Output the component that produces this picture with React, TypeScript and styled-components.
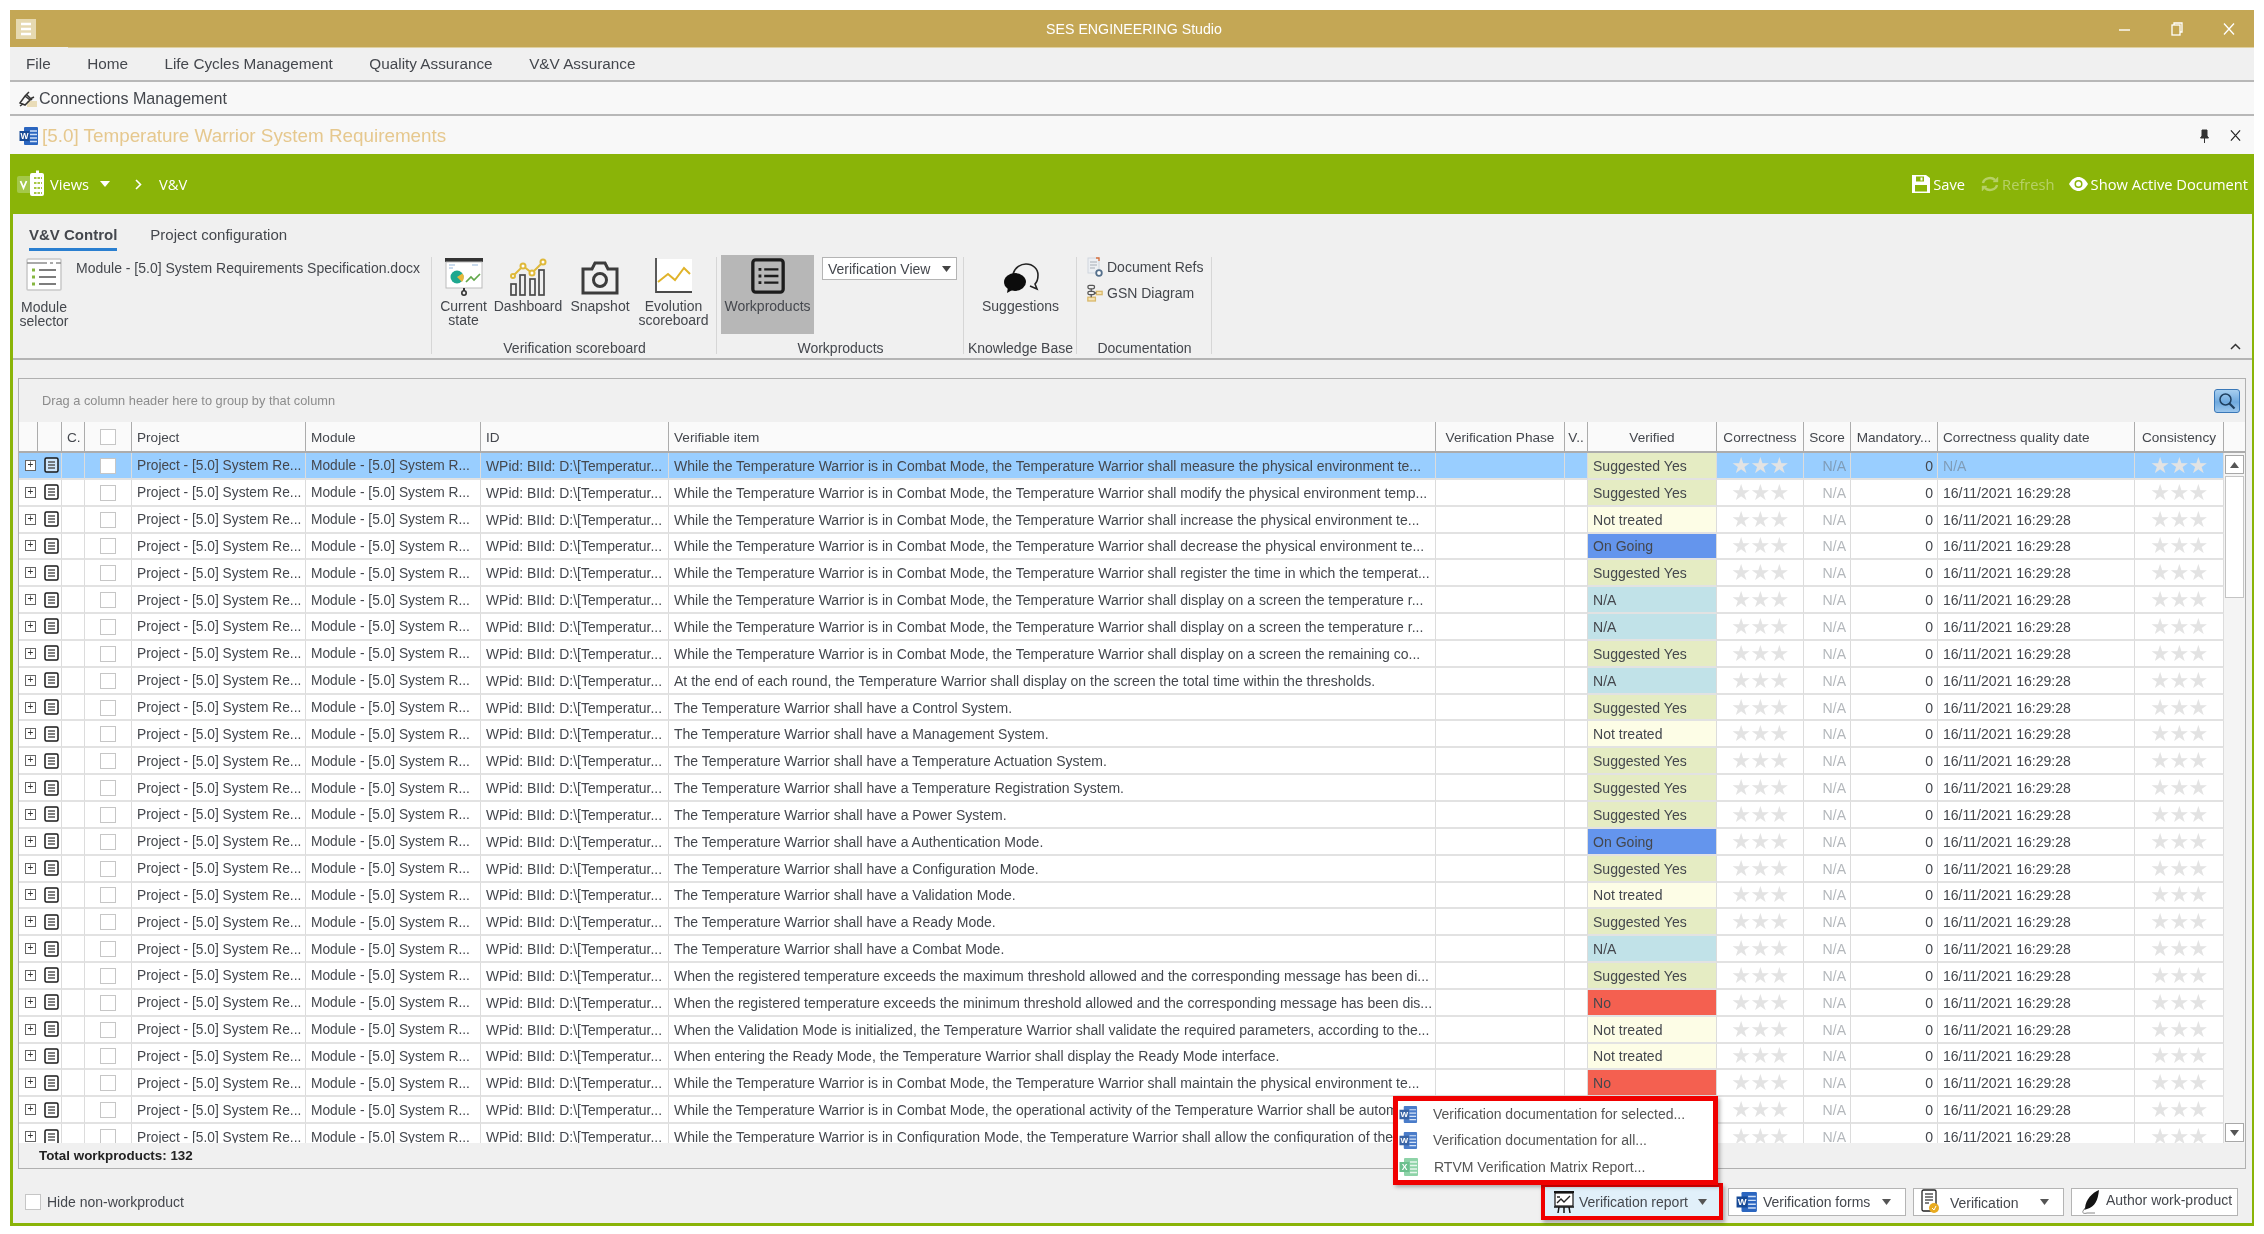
import React from 'react';
import styled, { createGlobalStyle } from 'styled-components';

const Global = createGlobalStyle`
  html, body { margin: 0; padding: 0; background: #fff; }
  body { font-family: "Liberation Sans", Arial, sans-serif; color: #44474d; }
  * { box-sizing: border-box; }
`;

const Shell = styled.div`
  width: 2264px;
  height: 1234px;
  padding: 10px 10px 8px 10px;
  overflow: hidden;
  background: #fff;
  filter: blur(0.35px);
`;
const TitleBar = styled.header`
  height: 38px;
  background: #c4a755;
  box-shadow: inset 0 -1px #dfd0a0;
  display: grid;
  grid-template-columns: 1fr auto 1fr;
  align-items: center;
  padding-left: 6px;
  color: #fff;
`;
const TitleText = styled.div`
  font-size: 14.2px;
  margin-left: -2px;
`;
const WinControls = styled.div`
  display: flex;
  gap: 40px;
  padding-right: 19px;
  align-items: center;
  justify-content: flex-end;
`;
const MenuBar = styled.nav`
  height: 34px;
  background: #f0f0f0;
  border-bottom: 2px solid #b8b8b8;
  display: flex;
  align-items: center;
  gap: 36.5px;
  padding-left: 16px;
  font-size: 15.3px;
  position: relative;
  &::before {
    content: '';
    position: absolute;
    left: 0;
    top: -1px;
    width: 58px;
    height: 1px;
    background: #f0f0f0;
  }
`;
const ConnBar = styled.div`
  height: 34px;
  background: #f8f8f8;
  border-bottom: 2px solid #b8b8b8;
  display: flex;
  align-items: center;
  gap: 1px;
  padding: 1px 0 0 8px;
  font-size: 16.1px;
`;
const DocBar = styled.div`
  height: 38px;
  background: #f8f8f8;
  display: flex;
  align-items: center;
  padding: 1px 0 0 9px;
  gap: 3px;
`;
const DocTitle = styled.div`
  flex: 1;
  font-size: 18.85px;
  color: #e6c88e;
`;
const DocActions = styled.div`
  display: flex;
  align-items: center;
  gap: 21px;
  padding-right: 13px;
`;
const GreenBar = styled.div`
  height: 60px;
  background: #8ab408;
  color: #fff;
  display: flex;
  align-items: center;
  padding-left: 7px;
  font-family: "Open Sans", sans-serif;
  font-size: 14.7px;
`;
const GreenLeft = styled.div`
  flex: 1;
  display: flex;
  align-items: center;
`;
const ViewsLabel = styled.span`
  margin-left: 3px;
`;
const ViewsCaret = styled.span`
  margin: 0 25px 0 11px;
  display: inline-flex;
`;
const Crumb = styled.span`
  margin-left: 17px;
`;
const GreenAction = styled.div<{ $off?: boolean; $mr?: number }>`
  display: flex;
  align-items: center;
  gap: 3px;
  margin-right: ${p => p.$mr ?? 14}px;
  opacity: ${p => (p.$off ? 0.38 : 1)};
`;
const Main = styled.main`
  height: 1012px;
  background: #f0f0f0;
  border-left: 3px solid #8ab408;
  border-right: 2px solid #8ab408;
  border-bottom: 3px solid #8ab408;
  position: relative;
`;
const Ribbon = styled.section`
  height: 146px;
  border-bottom: 2px solid #b4b4b4;
  position: relative;
`;
const Tabs = styled.div`
  height: 41px;
  display: flex;
  gap: 33px;
  padding-left: 16px;
  padding-top: 12px;
  font-size: 15px;
`;
const Tab = styled.div<{ $active?: boolean }>`
  height: 25px;
  font-weight: ${p => (p.$active ? 700 : 400)};
  border-bottom: ${p => (p.$active ? '3px solid #2a7fd0' : 'none')};
`;
const Groups = styled.div`
  display: flex;
  height: 103px;
`;
const Group = styled.div<{ $w: number }>`
  width: ${p => p.$w}px;
  height: 100%;
  display: flex;
  flex-direction: column;
  position: relative;
  &::after {
    content: '';
    position: absolute;
    right: 0;
    top: 2px;
    bottom: 4px;
    width: 1px;
    background: #d6d6d6;
  }
`;
const GroupBody = styled.div<{ $pl?: number }>`
  flex: 1;
  display: flex;
  min-height: 0;
  padding-left: ${p => p.$pl ?? 0}px;
`;
const GroupLabel = styled.div`
  height: 24px;
  padding-top: 4px;
  text-align: center;
  font-size: 14px;
  line-height: 20px;
`;
const RibbonBtn = styled.div<{ $w: number; $active?: boolean }>`
  width: ${p => p.$w}px;
  height: 79px;
  display: flex;
  flex-direction: column;
  align-items: center;
  font-size: 14px;
  line-height: 14px;
  text-align: center;
  padding-top: 3px;
  background: ${p => (p.$active ? '#b7b7b7' : 'transparent')};
  & > svg { display: block; margin-bottom: 3px; flex: none; }
`;
const IconSlot = styled.span<{ $pt: number }>`
  height: 38px;
  padding-top: ${p => p.$pt}px;
  flex: none;
`;
const BtnText = styled.span<{ $mt: number }>`
  margin-top: ${p => p.$mt}px;
`;
const ModuleName = styled.div`
  font-size: 14px;
  padding: 5px 0 0 1px;
  width: 346px;
`;
const Combo = styled.div`
  width: 135px;
  height: 23px;
  margin: 2px 0 0 8px;
  background: #fff;
  border: 1px solid #b4b4b4;
  font-size: 14px;
  display: flex;
  align-items: center;
  justify-content: space-between;
  padding: 0 5px 0 5px;
`;
const Caret = styled.span<{ $c?: string; $w?: number }>`
  display: inline-block;
  width: 0;
  height: 0;
  border-left: ${p => (p.$w ?? 8) / 2}px solid transparent;
  border-right: ${p => (p.$w ?? 8) / 2}px solid transparent;
  border-top: ${p => Math.round((p.$w ?? 8) * 0.55)}px solid ${p => p.$c ?? '#444'};
`;
const DocLinks = styled.div`
  display: flex;
  flex-direction: column;
  gap: 7px;
  padding: 2px 0 0 10px;
  font-size: 14px;
`;
const DocLink = styled.div`
  display: flex;
  align-items: center;
  gap: 4px;
  height: 19px;
`;
const Collapse = styled.div`
  position: absolute;
  right: 11px;
  bottom: 8px;
  line-height: 0;
`;
const GridBox = styled.section`
  margin: 18px 0 0 5px;
  width: 2228px;
  height: 791px;
  border: 1px solid #b0b0b0;
  display: flex;
  flex-direction: column;
  background: #f0f0f0;
`;
const DragPanel = styled.div`
  height: 43px;
  display: flex;
  align-items: center;
  justify-content: space-between;
  padding: 0 5px 0 23px;
  color: #8c8c8c;
  font-size: 12.8px;
`;
const SearchBtn = styled.div`
  width: 26px;
  height: 24px;
  border-radius: 3px;
  border: 1px solid #3a78b8;
  background: linear-gradient(#a8cff0, #6fa9de 55%, #9cc6ec);
  display: flex;
  align-items: center;
  justify-content: center;
`;
const HeadRow = styled.div`
  height: 31px;
  display: grid;
  grid-template-columns: 19px 24px 23px 47px 174px 175px 188px 767px 129px 23px 129px 87px 47px 87px 197px 89px 1fr;
  background: #fafafa;
  border-bottom: 2px solid #acacac;
  font-size: 13.6px;
`;
const HeadCell = styled.div<{ $c?: boolean }>`
  border-right: 1px solid #acacac;
  display: flex;
  align-items: center;
  justify-content: ${p => (p.$c ? 'center' : 'flex-start')};
  padding: 1px ${p => (p.$c ? '0' : '5px')} 0;
  white-space: nowrap;
  overflow: hidden;
`;
const Body = styled.div`
  height: 690px;
  display: flex;
  overflow: hidden;
  background: #fff;
`;
const Rows = styled.div`
  width: 2205px;
  flex: none;
`;
const Row = styled.div<{ $sel?: boolean }>`
  height: 26.85px;
  display: grid;
  grid-template-columns: 43px 23px 47px 174px 175px 188px 767px 129px 23px 129px 87px 47px 87px 197px 89px;
  background: ${p => (p.$sel ? '#99ceff' : '#fff')};
`;
const Cell = styled.div<{ $right?: boolean; $bg?: string; $color?: string; $center?: boolean; $fs?: number }>`
  display: flex;
  align-items: center;
  justify-content: ${p => (p.$right ? 'flex-end' : p.$center ? 'center' : 'flex-start')};
  padding: 1px ${p => (p.$right ? '4px' : '5px')} 0 5px;
  border-right: 1px solid #dcdcdc;
  border-bottom: 2px solid #e2e2e2;
  font-size: ${p => p.$fs ?? 14.05}px;
  white-space: nowrap;
  overflow: hidden;
  background: ${p => p.$bg ?? 'transparent'};
  color: ${p => p.$color ?? '#44474d'};
`;
const LeadCell = styled(Cell)`
  padding: 0 0 0 6px;
  gap: 8px;
`;
const Expander = styled.span`
  width: 11px;
  height: 11px;
  border: 1px solid #666;
  background: #fff;
  flex: none;
  font-size: 10px;
  line-height: 8px;
  text-align: center;
  color: #333;
`;
const Box = styled.span`
  width: 16px;
  height: 16px;
  border: 1px solid #c6c6c6;
  background: #fff;
  display: block;
  flex: none;
`;
const Stars = styled.div`
  color: #e3e3e3;
  font-size: 22px;
  display: flex;
  justify-content: center;
  width: 100%;
  font-family: "DejaVu Sans", sans-serif;
  line-height: 1;
  letter-spacing: -0.5px;
`;
const ScrollTrack = styled.div`
  flex: 1;
  display: flex;
  flex-direction: column;
  padding: 2px 1px 1px 1px;
  gap: 2px;
  background: #f4f4f4;
`;
const ScrollBtn = styled.div`
  height: 19px;
  background: #fff;
  border: 1px solid #a8a8a8;
  display: flex;
  align-items: center;
  justify-content: center;
`;
const ScrollThumb = styled.div`
  height: 122px;
  background: #fff;
  border: 1px solid #c4c4c4;
`;
const Spacer = styled.div`
  flex: 1;
`;
const Total = styled.div`
  height: 25px;
  font-weight: 700;
  font-size: 13.4px;
  color: #222;
  display: flex;
  align-items: center;
  padding-left: 20px;
  background: #f0f0f0;
`;
const Footer = styled.footer`
  height: 54px;
  padding: 11px 14px 0 12px;
  display: flex;
  align-items: center;
  position: relative;
`;
const HideLabel = styled.label`
  display: flex;
  align-items: center;
  gap: 6px;
  font-size: 14px;
  flex: 1;
  padding-top: 1px;
`;
const ActionBtn = styled.div<{ $w: number; $hl?: boolean; $ml?: number; $gap?: number }>`
  width: ${p => p.$w}px;
  height: ${p => (p.$hl ? 29 : 28)}px;
  margin-left: ${p => p.$ml ?? 7}px;
  background: ${p => (p.$hl ? '#e1f0fa' : '#fff')};
  border: 1px solid ${p => (p.$hl ? '#e1f0fa' : '#b4b4b4')};
  display: flex;
  align-items: center;
  padding-left: 7px;
  gap: ${p => p.$gap ?? 5}px;
  font-size: 14px;
  white-space: nowrap;
  box-shadow: ${p => (p.$hl ? '0 0 0 4px #f00000, 2px 3px 4px 4px rgba(0,0,0,.3)' : 'none')};
`;
const BtnCaret = styled.span<{ $ml: number }>`
  margin-left: ${p => p.$ml}px;
  display: inline-flex;
`;
const RaisedText = styled.span`
  margin-top: -3px;
`;
const LowText = styled.span`
  margin-top: 2px;
`;
const Popup = styled.div`
  position: absolute;
  left: 1380px;
  bottom: 38px;
  width: 325px;
  height: 89px;
  background: #fff;
  border: 5px solid #f00000;
  box-shadow: 2px 2px 4px rgba(0,0,0,.3);
  display: grid;
  grid-template-rows: repeat(3, 1fr);
  z-index: 3;
`;
const PopupItem = styled.div`
  display: flex;
  align-items: center;
  gap: 15px;
  font-size: 14px;
  color: #555;
  padding-left: 1px;
  white-space: nowrap;
`;
const PaleSvg = styled.svg<{ $pale?: boolean }>`
  flex: none;
  opacity: ${p => (p.$pale ? 0.85 : 1)};
`;

/* ---------- drawings ---------- */
const AppGlyph = () => (
  <svg width="20" height="20" viewBox="0 0 20 20">
    <rect width="20" height="20" fill="#e6d9b0" />
    <path d="M5 5h10M5 10h10M5 15h10" stroke="#fff" strokeWidth="2.4" />
  </svg>
);
const WinMin = () => (
  <svg width="12" height="12" viewBox="0 0 12 12"><path d="M0 7h11" stroke="#fff" strokeWidth="1.4" /></svg>
);
const WinMax = () => (
  <svg width="12" height="14" viewBox="0 0 12 14" fill="none" stroke="#fff" strokeWidth="1.3"><rect x="1" y="3" width="8" height="10" /><path d="M3 3V1h8v9H9" /></svg>
);
const WinClose = ({ c = '#fff', s = 12 }: { c?: string; s?: number }) => (
  <svg width={s} height={s} viewBox="0 0 12 12"><path d="M1 0.5l10 11M11 0.5l-10 11" stroke={c} strokeWidth="1.3" fill="none" /></svg>
);
const Plug = () => (
  <svg width="20" height="20" viewBox="0 0 20 20" fill="none">
    <rect x="9" y="12" width="10" height="6" fill="#e9dcb8" />
    <path d="M2 14l5-7 5 4-5 5zM7 7l4-4M12 10l4-2M2 17l3-2M9 6l5 5" stroke="#333" strokeWidth="1.5" />
  </svg>
);
const WordIcon = ({ s = 20, pale }: { s?: number; pale?: boolean }) => (
  <PaleSvg width={s} height={s} viewBox="0 0 20 20" $pale={pale}>
    <rect x="5" y="1" width="14" height="18" rx="1" fill="#2b66c0" />
    <path d="M11 5h7M11 8.5h7M11 12h7M11 15.5h7" stroke="#cfe0f6" strokeWidth="1.3" />
    <rect x="0.5" y="5" width="10" height="10" fill="#174a96" />
    <text x="5.5" y="13" fontSize="8.5" fontWeight="700" textAnchor="middle" fill="#fff" fontFamily="Liberation Sans">W</text>
  </PaleSvg>
);
const ExcelIcon = () => (
  <PaleSvg width="20" height="20" viewBox="0 0 20 20">
    <rect x="5" y="1" width="14" height="18" rx="1" fill="#8ed3a8" />
    <path d="M11 5h7M11 8.5h7M11 12h7M11 15.5h7" stroke="#e6f6ec" strokeWidth="1.3" />
    <rect x="0.5" y="5" width="10" height="10" fill="#6cc08e" />
    <text x="5.5" y="13" fontSize="8.5" fontWeight="700" textAnchor="middle" fill="#fff" fontFamily="Liberation Sans">X</text>
  </PaleSvg>
);
const Pin = () => (
  <svg width="9" height="14" viewBox="0 0 9 14"><path d="M2 1h5v6l1.5 2h-8L2 7zM4.5 9v5" fill="#333" stroke="#333" /></svg>
);
const ViewsIcon = () => (
  <svg width="30" height="30" viewBox="0 0 30 30" fill="none">
    <rect x="0" y="7" width="15" height="17" rx="2" fill="#a4c84a" />
    <path d="M3.5 12l3 7 3-7" stroke="#fff" strokeWidth="1.8" />
    <rect x="13" y="4" width="14" height="23" rx="2" fill="#fff" />
    <path d="M19 1.5h3v3h-3z" fill="#fff" />
    <path d="M17 9h8M17 14h8M17 19h8M17 24h8" stroke="#8ab408" strokeWidth="1.6" strokeDasharray="2.5 1" />
  </svg>
);
const Chevron = () => (
  <svg width="7" height="11" viewBox="0 0 7 11" fill="none"><path d="M1 1l4.5 4.5L1 10" stroke="#fff" strokeWidth="1.6" /></svg>
);
const SaveIcon = () => (
  <svg width="18" height="18" viewBox="0 0 18 18"><path fillRule="evenodd" d="M0 0h14l4 3v15H0zM4 1.5v5h8v-5zM3 10v6.5h12V10z" fill="#fff" /><rect x="8.5" y="2.5" width="2" height="3" fill="#fff" /></svg>
);
const RefreshIcon = () => (
  <svg width="18" height="16" viewBox="0 0 18 16" fill="none" stroke="#fff" strokeWidth="2.4"><path d="M2 7a7 6 0 0 1 12-3" /><path d="M16 9a7 6 0 0 1-12 3" /><path d="M12 6l5-5v5zM6 10l-5 5v-5z" fill="#fff" strokeWidth="0.4" /></svg>
);
const EyeIcon = () => (
  <svg width="19" height="14" viewBox="0 0 19 14"><path d="M0 7c3-5 6-7 9.500-7S16 2 19 7c-3 5-6 7-9.500 7S3 12 0 7z" fill="#fff" /><circle cx="9.500" cy="7" r="4" fill="#8ab408" /><circle cx="9.500" cy="7" r="2.500" fill="#fff" /></svg>
);
const ModuleIcon = () => (
  <svg width="38" height="34" viewBox="0 0 38 34">
    <rect x="2" y="1" width="34" height="31" rx="1" fill="#fff" stroke="#c8c8c8" strokeWidth="1.5" />
    <path d="M2 5h34" stroke="#8d8d8d" strokeWidth="1.5" strokeDasharray="20 3 3 3" />
    <path d="M7 12h3" stroke="#86b640" strokeWidth="3" />
    <path d="M7 19h3M7 26h3" stroke="#86b640" strokeWidth="3" />
    <path d="M14 12h17M14 19h17M14 26h17" stroke="#7d7d7d" strokeWidth="1.8" />
  </svg>
);
const CurrentIcon = () => (
  <svg width="40" height="38" viewBox="0 0 40 38">
    <rect x="1" y="0" width="38" height="4" fill="#333" />
    <rect x="2" y="4" width="36" height="26" fill="#fff" stroke="#bbb" />
    <path d="M5 7h6M5 10h4M28 7h6" stroke="#b9cfe8" strokeWidth="1.5" />
    <circle cx="13" cy="19" r="6.500" fill="#1fa88f" />
    <path d="M13 19l5.500-3.500A6.500 6.500 0 0 1 18 24z" fill="#e8b83a" />
    <path d="M22 24l5-5 3 3 6-6" stroke="#62a84a" strokeWidth="1.7" fill="none" />
    <path d="M20 30v3" stroke="#333" strokeWidth="2" />
    <circle cx="20" cy="35" r="2.200" fill="none" stroke="#333" strokeWidth="1.600" />
  </svg>
);
const DashboardIcon = () => (
  <svg width="38" height="38" viewBox="0 0 38 38" fill="none">
    <g stroke="#4a4a4a" strokeWidth="1.700">
      <rect x="2" y="26" width="5" height="11" />
      <rect x="11" y="17" width="5" height="20" />
      <rect x="21" y="21" width="5" height="16" />
      <rect x="30" y="12" width="5" height="25" />
    </g>
    <path d="M4 18l10-10 9 7 11-11" stroke="#dfb93a" strokeWidth="2" />
    <g fill="#fff" stroke="#dfb93a" strokeWidth="2">
      <circle cx="4" cy="18" r="2" /><circle cx="14" cy="8" r="2.500" /><circle cx="23" cy="15" r="2.500" /><circle cx="34" cy="4" r="2.500" />
    </g>
  </svg>
);
const CameraIcon = () => (
  <svg width="38" height="34" viewBox="0 0 38 34" fill="none" stroke="#3c3c3c" strokeWidth="3">
    <path d="M2 8h9l3-6h10l3 6h9v24H2z" />
    <circle cx="19" cy="19" r="6.500" />
  </svg>
);
const EvolutionIcon = () => (
  <svg width="38" height="36" viewBox="0 0 38 36" fill="none">
    <rect x="2" y="1" width="35" height="32" fill="#fff" />
    <path d="M1 0v34h36" stroke="#4a4a4a" strokeWidth="1.800" />
    <path d="M3 24l10-8 7 6 9-12 6 6" stroke="#e0b32a" strokeWidth="2" />
  </svg>
);
const ListIcon = ({ s = 36 }: { s?: number }) => (
  <svg width={s} height={s} viewBox="0 0 36 38" fill="none" stroke="#1c1c1c">
    <rect x="2" y="2" width="32" height="34" rx="3" strokeWidth="3.500" />
    <path d="M8 12h3M8 19h3M8 26h3" strokeWidth="3" />
    <path d="M14 12h15M14 19h15M14 26h15" strokeWidth="2.600" />
  </svg>
);
const ChatIcon = () => (
  <svg width="36" height="32" viewBox="0 0 36 32">
    <path d="M10 11C12 4 18 1 23 1c7 0 12 5 12 11 0 4-1 7-3 9l2 5-7-3" fill="none" stroke="#222" strokeWidth="1.600" />
    <ellipse cx="12" cy="19" rx="11" ry="9" fill="#0c0c0c" />
    <path d="M5 24l-1 6 7-4z" fill="#0c0c0c" />
  </svg>
);
const RefsIcon = () => (
  <svg width="16" height="20" viewBox="0 0 16 20" fill="none">
    <rect x="1" y="1" width="11" height="15" fill="#eceff3" stroke="#cfd6de" />
    <path d="M3 5h7M3 8h7M3 11h5" stroke="#a6adb6" />
    <path d="M9 1h3v3" stroke="#d8703c" strokeWidth="1.300" />
    <circle cx="12" cy="16" r="2.800" fill="#fff" stroke="#55708c" strokeWidth="1.800" />
  </svg>
);
const GsnIcon = () => (
  <svg width="16" height="20" viewBox="0 0 19 20" fill="none" strokeWidth="1.500">
    <rect x="1" y="1" width="8" height="4" rx="2" stroke="#555" />
    <rect x="1" y="8" width="8" height="4" rx="2" stroke="#555" />
    <rect x="1" y="15" width="9" height="4.500" fill="#f6e2b0" stroke="#d8b768" />
    <rect x="11" y="8" width="7" height="4" fill="#f6e2b0" stroke="#d8b768" />
    <path d="M5 5v3M5 12v3M9 10h2" stroke="#555" />
  </svg>
);
const SearchGlyph = () => (
  <svg width="18" height="18" viewBox="0 0 18 18" fill="none" stroke="#1f3f5f"><circle cx="7.500" cy="7.500" r="5.500" strokeWidth="1.500" /><path d="M11.500 11.500l5 5" strokeWidth="2.200" /></svg>
);
const DocMini = ({ sel }: { sel?: boolean }) => (
  <PaleSvg width="15" height="16" viewBox="0 0 15 16" fill="none">
    <rect x="1" y="1" width="13" height="14" rx="1.500" stroke="#1a1a1a" strokeWidth="1.500" fill={sel ? '#cfe6fb' : '#fff'} />
    <path d="M4 5h7M4 8h7M4 11h7" stroke="#555" strokeWidth="1.400" />
  </PaleSvg>
);
const ChartBoard = () => (
  <svg width="22" height="24" viewBox="0 0 22 24" fill="none" stroke="#151515">
    <path d="M1 2h20" strokeWidth="2" />
    <rect x="2" y="3" width="18" height="13" fill="#fff" strokeWidth="1.200" />
    <path d="M4 13l4-4 3 3 6-6M4 7h3" stroke="#222" strokeWidth="1.400" />
    <path d="M1 17h20M6 17l-1 6M11 17v6M16 17l1 6" strokeWidth="1.500" />
  </svg>
);
const VerifDoc = () => (
  <PaleSvg width="20" height="26" viewBox="0 0 20 26" fill="none">
    <rect x="1" y="1" width="14" height="21" rx="1.500" fill="#fff" stroke="#222" strokeWidth="1.300" />
    <path d="M4 5h8M4 8h8M4 11h8M4 14h4" stroke="#555" strokeWidth="1.300" />
    <circle cx="13" cy="19" r="5" fill="#e9ab20" />
    <path d="M11 19l2 2 2-4" stroke="#fff" />
  </PaleSvg>
);
const Quill = () => (
  <PaleSvg width="24" height="26" viewBox="0 0 24 26">
    <path d="M20 1C13 4 7 10 6 19l-1 2 3-1c8-2 11-9 12-19z" fill="#141414" />
    <path d="M6 19l-2 3c-1 2 1 3 4 2h8" fill="none" stroke="#888" />
  </PaleSvg>
);
const Triangle = ({ up, c = '#555' }: { up?: boolean; c?: string }) => (
  <svg width="9" height="6" viewBox="0 0 9 6"><path d={up ? 'M4.500 0L9 6H0z' : 'M0 0h9L4.500 6z'} fill={c} /></svg>
);

/* ---------- data ---------- */
type Verdict = 'Suggested Yes' | 'Not treated' | 'On Going' | 'N/A' | 'No';
const VERDICT_BG: Record<Verdict, string> = {
  'Suggested Yes': '#e5ecc3',
  'Not treated': '#fdfde6',
  'On Going': '#6495ed',
  'N/A': '#c1e2e8',
  No: '#f46050',
};
const W = 'While the Temperature Warrior is in Combat Mode, the Temperature Warrior shall ';
const T = 'The Temperature Warrior shall have a ';
const ITEMS: [string, Verdict][] = [
  [W + 'measure the physical environment te...', 'Suggested Yes'],
  [W + 'modify the physical environment temp...', 'Suggested Yes'],
  [W + 'increase the physical environment te...', 'Not treated'],
  [W + 'decrease the physical environment te...', 'On Going'],
  [W + 'register the time in which the temperat...', 'Suggested Yes'],
  [W + 'display on a screen the temperature r...', 'N/A'],
  [W + 'display on a screen the temperature r...', 'N/A'],
  [W + 'display on a screen the remaining co...', 'Suggested Yes'],
  ['At the end of each round, the Temperature Warrior shall display on the screen the total time within the thresholds.', 'N/A'],
  [T + 'Control System.', 'Suggested Yes'],
  [T + 'Management System.', 'Not treated'],
  [T + 'Temperature Actuation System.', 'Suggested Yes'],
  [T + 'Temperature Registration System.', 'Suggested Yes'],
  [T + 'Power System.', 'Suggested Yes'],
  [T + 'Authentication Mode.', 'On Going'],
  [T + 'Configuration Mode.', 'Suggested Yes'],
  [T + 'Validation Mode.', 'Not treated'],
  [T + 'Ready Mode.', 'Suggested Yes'],
  [T + 'Combat Mode.', 'N/A'],
  ['When the registered temperature exceeds the maximum threshold allowed and the corresponding message has been di...', 'Suggested Yes'],
  ['When the registered temperature exceeds the minimum threshold allowed and the corresponding message has been dis...', 'No'],
  ['When the Validation Mode is initialized, the Temperature Warrior shall validate the required parameters, according to the...', 'Not treated'],
  ['When entering the Ready Mode, the Temperature Warrior shall display the Ready Mode interface.', 'Not treated'],
  [W + 'maintain the physical environment te...', 'No'],
  ['While the Temperature Warrior is in Combat Mode, the operational activity of the Temperature Warrior shall be autom...', 'Suggested Yes'],
  ['While the Temperature Warrior is in Configuration Mode, the Temperature Warrior shall allow the configuration of the...', 'Suggested Yes'],
];

const HEAD: { t: string; c?: boolean }[] = [
  { t: '' }, { t: '' }, { t: 'C.' }, { t: '' }, { t: 'Project' }, { t: 'Module' }, { t: 'ID' }, { t: 'Verifiable item' },
  { t: 'Verification Phase', c: true }, { t: 'V..', c: true }, { t: 'Verified', c: true }, { t: 'Correctness', c: true },
  { t: 'Score', c: true }, { t: 'Mandatory...', c: true }, { t: 'Correctness quality date' }, { t: 'Consistency', c: true },
];

export default function App() {
  return (
    <Shell>
      <Global />
      <TitleBar>
        <AppGlyph />
        <TitleText>SES ENGINEERING Studio</TitleText>
        <WinControls>
          <WinMin />
          <WinMax />
          <WinClose />
        </WinControls>
      </TitleBar>
      <MenuBar>
        <span>File</span>
        <span>Home</span>
        <span>Life Cycles Management</span>
        <span>Quality Assurance</span>
        <span>V&amp;V Assurance</span>
      </MenuBar>
      <ConnBar>
        <Plug />
        <span>Connections Management</span>
      </ConnBar>
      <DocBar>
        <WordIcon />
        <DocTitle>[5.0] Temperature Warrior System Requirements</DocTitle>
        <DocActions>
          <Pin />
          <WinClose c="#222" s={11} />
        </DocActions>
      </DocBar>
      <GreenBar>
        <GreenLeft>
          <ViewsIcon />
          <ViewsLabel>Views</ViewsLabel>
          <ViewsCaret><Caret $c="#fff" $w={11} /></ViewsCaret>
          <Chevron />
          <Crumb>V&amp;V</Crumb>
        </GreenLeft>
        <GreenAction $mr={16}><SaveIcon />Save</GreenAction>
        <GreenAction $off $mr={14}><RefreshIcon />Refresh</GreenAction>
        <GreenAction $mr={6}><EyeIcon />Show Active Document</GreenAction>
      </GreenBar>
      <Main>
        <Ribbon>
          <Tabs>
            <Tab $active>V&amp;V Control</Tab>
            <Tab>Project configuration</Tab>
          </Tabs>
          <Groups>
            <Group $w={419}>
              <GroupBody>
                <RibbonBtn $w={62}>
                  <ModuleIcon />
                  <BtnText $mt={5}>Module<br />selector</BtnText>
                </RibbonBtn>
                <ModuleName>Module - [5.0] System Requirements Specification.docx</ModuleName>
              </GroupBody>
              <GroupLabel />
            </Group>
            <Group $w={285}>
              <GroupBody>
                <RibbonBtn $w={63}><CurrentIcon />Current<br />state</RibbonBtn>
                <RibbonBtn $w={66}><DashboardIcon />Dashboard</RibbonBtn>
                <RibbonBtn $w={78}><IconSlot $pt={3}><CameraIcon /></IconSlot><BtnText $mt={3}>Snapshot</BtnText></RibbonBtn>
                <RibbonBtn $w={69}><EvolutionIcon /><BtnText $mt={2}>Evolution<br />scoreboard</BtnText></RibbonBtn>
              </GroupBody>
              <GroupLabel>Verification scoreboard</GroupLabel>
            </Group>
            <Group $w={247}>
              <GroupBody $pl={4}>
                <RibbonBtn $w={93} $active><ListIcon /><BtnText $mt={2}>Workproducts</BtnText></RibbonBtn>
                <Combo>Verification View<Triangle c="#444" /></Combo>
              </GroupBody>
              <GroupLabel>Workproducts</GroupLabel>
            </Group>
            <Group $w={113}>
              <GroupBody>
                <RibbonBtn $w={113}>
                  <IconSlot $pt={5}><ChatIcon /></IconSlot>
                  <BtnText $mt={3}>Suggestions</BtnText>
                </RibbonBtn>
              </GroupBody>
              <GroupLabel>Knowledge Base</GroupLabel>
            </Group>
            <Group $w={135}>
              <GroupBody>
                <DocLinks>
                  <DocLink><RefsIcon />Document Refs</DocLink>
                  <DocLink><GsnIcon />GSN Diagram</DocLink>
                </DocLinks>
              </GroupBody>
              <GroupLabel>Documentation</GroupLabel>
            </Group>
          </Groups>
          <Collapse>
            <svg width="11" height="7" viewBox="0 0 11 7" fill="none"><path d="M1 6l4.500-4.500L10 6" stroke="#333" strokeWidth="1.500" /></svg>
          </Collapse>
        </Ribbon>
        <GridBox>
          <DragPanel>
            <span>Drag a column header here to group by that column</span>
            <SearchBtn><SearchGlyph /></SearchBtn>
          </DragPanel>
          <HeadRow>
            {HEAD.map((h, i) => (
              <HeadCell key={i} $c={h.c || i === 3}>
                {i === 3 ? <Box /> : h.t}
              </HeadCell>
            ))}
            <span />
          </HeadRow>
          <Body>
            <Rows>
              {ITEMS.map(([text, verdict], i) => {
                const sel = i === 0;
                return (
                  <Row key={i} $sel={sel}>
                    <LeadCell>
                      <Expander>+</Expander>
                      <DocMini sel={sel} />
                    </LeadCell>
                    <Cell />
                    <Cell $center><Box /></Cell>
                    <Cell $fs={13.75}>Project - [5.0] System Re...</Cell>
                    <Cell $fs={13.75}>Module - [5.0] System R...</Cell>
                    <Cell $fs={13.9}>WPid: BIId: D:\[Temperatur...</Cell>
                    <Cell $fs={14.03}>{text}</Cell>
                    <Cell />
                    <Cell />
                    <Cell $bg={VERDICT_BG[verdict]}>{verdict}</Cell>
                    <Cell><Stars>★★★</Stars></Cell>
                    <Cell $right $color={sel ? '#7f9cb8' : '#b4b8bc'}>N/A</Cell>
                    <Cell $right>0</Cell>
                    {sel ? <Cell $color="#7f9cb8">N/A</Cell> : <Cell>16/11/2021 16:29:28</Cell>}
                    <Cell><Stars>★★★</Stars></Cell>
                  </Row>
                );
              })}
            </Rows>
            <ScrollTrack>
              <ScrollBtn><Triangle up /></ScrollBtn>
              <ScrollThumb />
              <Spacer />
              <ScrollBtn><Triangle /></ScrollBtn>
            </ScrollTrack>
          </Body>
          <Total>Total workproducts: 132</Total>
        </GridBox>
        <Footer>
          <HideLabel><Box />Hide non-workproduct</HideLabel>
          <Popup>
            <PopupItem><WordIcon s={19} pale />Verification documentation for selected...</PopupItem>
            <PopupItem><WordIcon s={19} pale />Verification documentation for all...</PopupItem>
            <PopupItem><ExcelIcon />RTVM Verification Matrix Report...</PopupItem>
          </Popup>
          <ActionBtn $w={174} $hl $ml={0} $gap={4}>
            <ChartBoard />Verification report<BtnCaret $ml={6}><Triangle /></BtnCaret>
          </ActionBtn>
          <ActionBtn $w={178} $ml={9}>
            <WordIcon s={22} />Verification forms<BtnCaret $ml={7}><Triangle /></BtnCaret>
          </ActionBtn>
          <ActionBtn $w={151} $gap={9}>
            <VerifDoc /><LowText>Verification</LowText><BtnCaret $ml={13}><Triangle /></BtnCaret>
          </ActionBtn>
          <ActionBtn $w={167} $gap={3}>
            <Quill /><RaisedText>Author work-product</RaisedText>
          </ActionBtn>
        </Footer>
      </Main>
    </Shell>
  );
}
